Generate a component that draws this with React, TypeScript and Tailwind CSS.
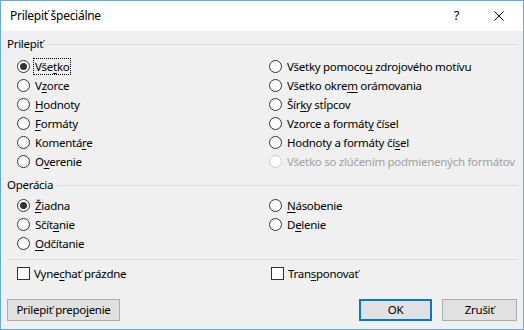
import type { ReactNode } from "react";

function U({ children }: { children: ReactNode }) {
  return <span className="underline decoration-1 underline-offset-[2px]">{children}</span>;
}

function Radio({ checked, disabled, focused, children }: { checked?: boolean; disabled?: boolean; focused?: boolean; children: ReactNode }) {
  return (
    <div className="flex h-[19px] items-center gap-[4px]">
      <span
        className={`flex h-[13px] w-[13px] shrink-0 items-center justify-center rounded-full border bg-white ${
          disabled ? "border-[#cccccc]" : "border-[#333333]"
        }`}
      >
        {checked && <span className="h-[7px] w-[7px] rounded-full bg-[#333333]" />}
      </span>
      <span
        className={`whitespace-nowrap px-[1px] leading-[15px] ${disabled ? "text-[#a0a0a0]" : "text-black"} ${
          focused ? "outline outline-1 outline-dotted outline-black" : ""
        }`}
      >
        {children}
      </span>
    </div>
  );
}

function Check({ children }: { children: ReactNode }) {
  return (
    <div className="flex h-[19px] items-center gap-[4px]">
      <span className="h-[13px] w-[13px] shrink-0 border border-[#333333] bg-white" />
      <span className="whitespace-nowrap">{children}</span>
    </div>
  );
}

function GroupLabel({ children }: { children: ReactNode }) {
  return (
    <div className="flex h-[16px] items-center gap-[4px] pr-[5px]">
      <span className="whitespace-nowrap">{children}</span>
      <div className="h-px flex-1 bg-[#dcdcdc]" />
    </div>
  );
}

function Button({ children, primary, className }: { children: ReactNode; primary?: boolean; className?: string }) {
  return (
    <button
      className={`flex h-[22px] items-center justify-center whitespace-nowrap bg-[#e1e1e1] text-black ${
        primary ? "border-2 border-[#0078d7]" : "border border-[#adadad]"
      } ${className ?? ""}`}
    >
      {children}
    </button>
  );
}

export default function App() {
  return (
    <div
      className="flex h-[330px] w-[524px] flex-col border border-[#64aae6] bg-[#f0f0f0] text-[11.5px] tracking-[-0.28px] text-black"
      style={{ fontFamily: '"Noto Sans", "Open Sans", sans-serif' }}
    >
      {/* title bar */}
      <div className="flex h-[30px] shrink-0 items-center bg-white pl-[9px]">
        <span className="flex-1 text-[12px]">Prilepiť špeciálne</span>
        <span className="mr-[35px] text-[13px]">?</span>
        <svg width="10" height="10" viewBox="0 0 10 10" className="mr-[19px]">
          <path d="M0.5 0.5 L9.5 9.5 M9.5 0.5 L0.5 9.5" stroke="#000" strokeWidth="1" />
        </svg>
      </div>

      <div className="flex flex-1 flex-col pl-[6px]">
        <div className="mt-[5px]">
          <GroupLabel>Prilepiť</GroupLabel>
        </div>
        <div className="mt-[5px] grid grid-cols-[252px_1fr] pl-[10px]">
          <div className="flex flex-col">
            <Radio checked focused>Vše<U>t</U>ko</Radio>
            <Radio>V<U>z</U>orce</Radio>
            <Radio><U>H</U>odnoty</Radio>
            <Radio><U>F</U>ormáty</Radio>
            <Radio>Komentá<U>r</U>e</Radio>
            <Radio>O<U>v</U>erenie</Radio>
          </div>
          <div className="flex flex-col">
            <Radio>Všetky pomoco<U>u</U> zdrojového motívu</Radio>
            <Radio>Všetko okre<U>m</U> orámovania</Radio>
            <Radio>Šír<U>k</U>y stĺpcov</Radio>
            <Radio>Vzorce a formát<U>y</U> čísel</Radio>
            <Radio>Hodnoty a formáty čí<U>s</U>el</Radio>
            <Radio disabled>Všetko so zlúčením podmienených formátov</Radio>
          </div>
        </div>

        <div className="mt-[6px]">
          <GroupLabel>Operácia</GroupLabel>
        </div>
        <div className="mt-[3px] grid grid-cols-[252px_1fr] pl-[10px]">
          <div className="flex flex-col">
            <Radio checked><U>Ž</U>iadna</Radio>
            <Radio>Sčít<U>a</U>nie</Radio>
            <Radio><U>O</U>dčítanie</Radio>
          </div>
          <div className="flex flex-col">
            <Radio><U>N</U>ásobenie</Radio>
            <Radio>D<U>e</U>lenie</Radio>
          </div>
        </div>

        <div className="mr-[5px] mt-[6px] h-px bg-[#dcdcdc]" />

        <div className="mt-[4px] grid grid-cols-[254px_1fr] pl-[10px]">
          <Check>Vyne<U>c</U>hať prázdne</Check>
          <Check>Tran<U>s</U>ponovať</Check>
        </div>

        <div className="mt-[16px] flex items-center pr-[6px]">
          <Button className="w-[113px]">Prilepiť prepo<U>j</U>enie</Button>
          <div className="flex-1" />
          <Button primary className="w-[73px]">OK</Button>
          <Button className="ml-[10px] w-[75px]">Zrušiť</Button>
        </div>
      </div>
    </div>
  );
}
